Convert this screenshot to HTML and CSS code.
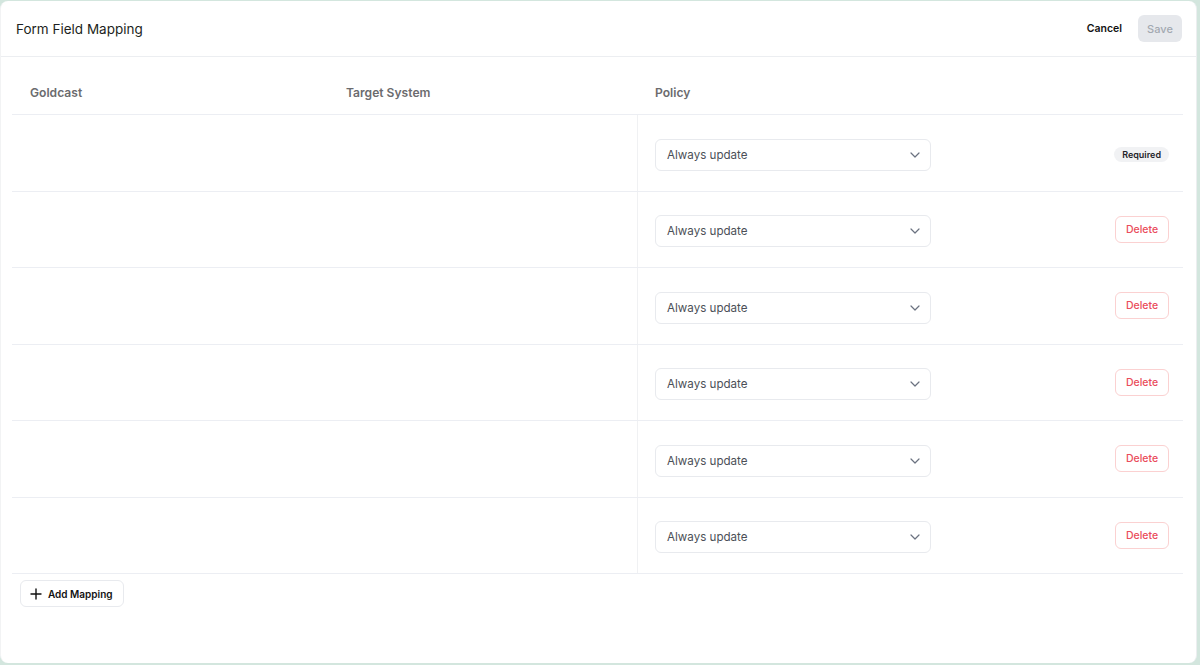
FILE: index.html
```html
<!DOCTYPE html>
<html lang="en">
<head>
    <meta charset="UTF-8">
    <meta name="viewport" content="width=device-width, initial-scale=1.0">
    <title>Form Field Mapping</title>
    <link rel="stylesheet" href="styles.css">
</head>
<body>
    <div class="panel">
        <div class="panel-header">
            <h1>Form Field Mapping</h1>
            <div class="header-actions">
                <button class="btn-link">Cancel</button>
                <button class="btn-save" disabled>Save</button>
            </div>
        </div>

        <div class="mapping">
            <div class="mapping-head">
                <div class="cell">Goldcast</div>
                <div class="cell">Target System</div>
                <div class="cell">Policy</div>
            </div>
            <div id="rows"></div>
        </div>

        <button class="btn-add">
            <svg width="12" height="12" viewBox="0 0 12 12"><path d="M6 1v10M1 6h10" stroke="#111" stroke-width="1.4" stroke-linecap="round"/></svg>
            Add Mapping
        </button>
    </div>

    <script>
        const rows = document.getElementById('rows');
        const chevron = '<svg width="10" height="6" viewBox="0 0 10 6"><path d="M1 1l4 4 4-4" fill="none" stroke="#6b7280" stroke-width="1.2" stroke-linecap="round" stroke-linejoin="round"/></svg>';

        for (let i = 0; i < 6; i++) {
            const action = i === 0
                ? '<span class="badge">Required</span>'
                : '<button class="btn-delete">Delete</button>';
            rows.innerHTML += `
                <div class="mapping-row">
                    <div class="cell"></div>
                    <div class="cell"></div>
                    <div class="cell policy">
                        <div class="select"><span>Always update</span>${chevron}</div>
                        ${action}
                    </div>
                </div>`;
        }
    </script>
</body>
</html>
```

FILE: styles.css
```css
html, body {
    margin: 0;
    height: 100%;
}
body {
    font-family: Inter, "Noto Sans", Arial, sans-serif;
    background-color: #d3e6de;
    padding: 1px 3px 2px 0;
    box-sizing: border-box;
}
.panel {
    background: #fff;
    height: 100%;
    border-radius: 8px;
    border-right: 1px solid #eceef0;
    border-left: 1px solid #f2f3f4;
    box-sizing: border-box;
    padding: 0 13px 0 11px;
}
.panel-header {
    height: 55px;
    border-bottom: 1px solid #eceef1;
    margin: 0 -13px 0 -11px;
    padding: 0 14px 0 15px;
    display: flex;
    align-items: center;
    justify-content: space-between;
}
.panel-header h1 {
    margin: 0;
    font-size: 13.5px;
    font-weight: 400;
    color: #1d1f22;
}
.header-actions {
    display: flex;
    align-items: center;
    gap: 16px;
}
button {
    font-family: inherit;
    cursor: pointer;
}
.btn-link {
    background: none;
    border: none;
    font-size: 10.5px;
    font-weight: 600;
    color: #111;
    padding: 0;
}
.btn-save {
    width: 44px;
    height: 27px;
    border: none;
    border-radius: 6px;
    background-color: #e6e8ec;
    color: #a3a8b1;
    font-size: 11px;
    font-weight: 500;
}
.mapping-head, .mapping-row {
    display: grid;
    grid-template-columns: 316px 309px 1fr;
    border-bottom: 1px solid #eceef3;
}
.mapping-head {
    height: 58px;
    box-sizing: border-box;
    align-items: center;
    font-size: 12.1px;
    font-weight: 600;
    color: #6b6b6e;
    padding-top: 13px;
}
.mapping-head .cell {
    padding-left: 18px;
}
.mapping-row {
    height: 76.5px;
    box-sizing: border-box;
}
.mapping-row .cell:nth-child(3) {
    border-left: 1px solid #f0f1f3;
}
.policy {
    display: flex;
    align-items: center;
    justify-content: space-between;
    padding: 0 14px 0 17px;
}
.select {
    width: 276px;
    height: 32px;
    box-sizing: border-box;
    border: 1px solid #e8eaee;
    border-radius: 6px;
    display: flex;
    align-items: center;
    justify-content: space-between;
    padding: 0 10px 0 11px;
    font-size: 11.6px;
    color: #4b4f57;
    margin-top: 4px;
}
.badge {
    background-color: #f1f2f4;
    border-radius: 999px;
    font-size: 9px;
    font-weight: 600;
    color: #1f2328;
    padding: 2px 8px;
    margin-top: 4px;
}
.btn-delete {
    width: 54px;
    height: 27px;
    background: #fff;
    border: 1px solid #fbd1d1;
    border-radius: 6px;
    color: #ea4c5c;
    font-size: 10.5px;
    font-weight: 500;
}
.btn-add {
    margin: 6px 0 0 8px;
    height: 27px;
    padding: 0 10px 0 9px;
    display: flex;
    align-items: center;
    gap: 6px;
    background: #fff;
    border: 1px solid #e8eaee;
    border-radius: 6px;
    font-size: 10px;
    font-weight: 600;
    color: #111;
}
```
